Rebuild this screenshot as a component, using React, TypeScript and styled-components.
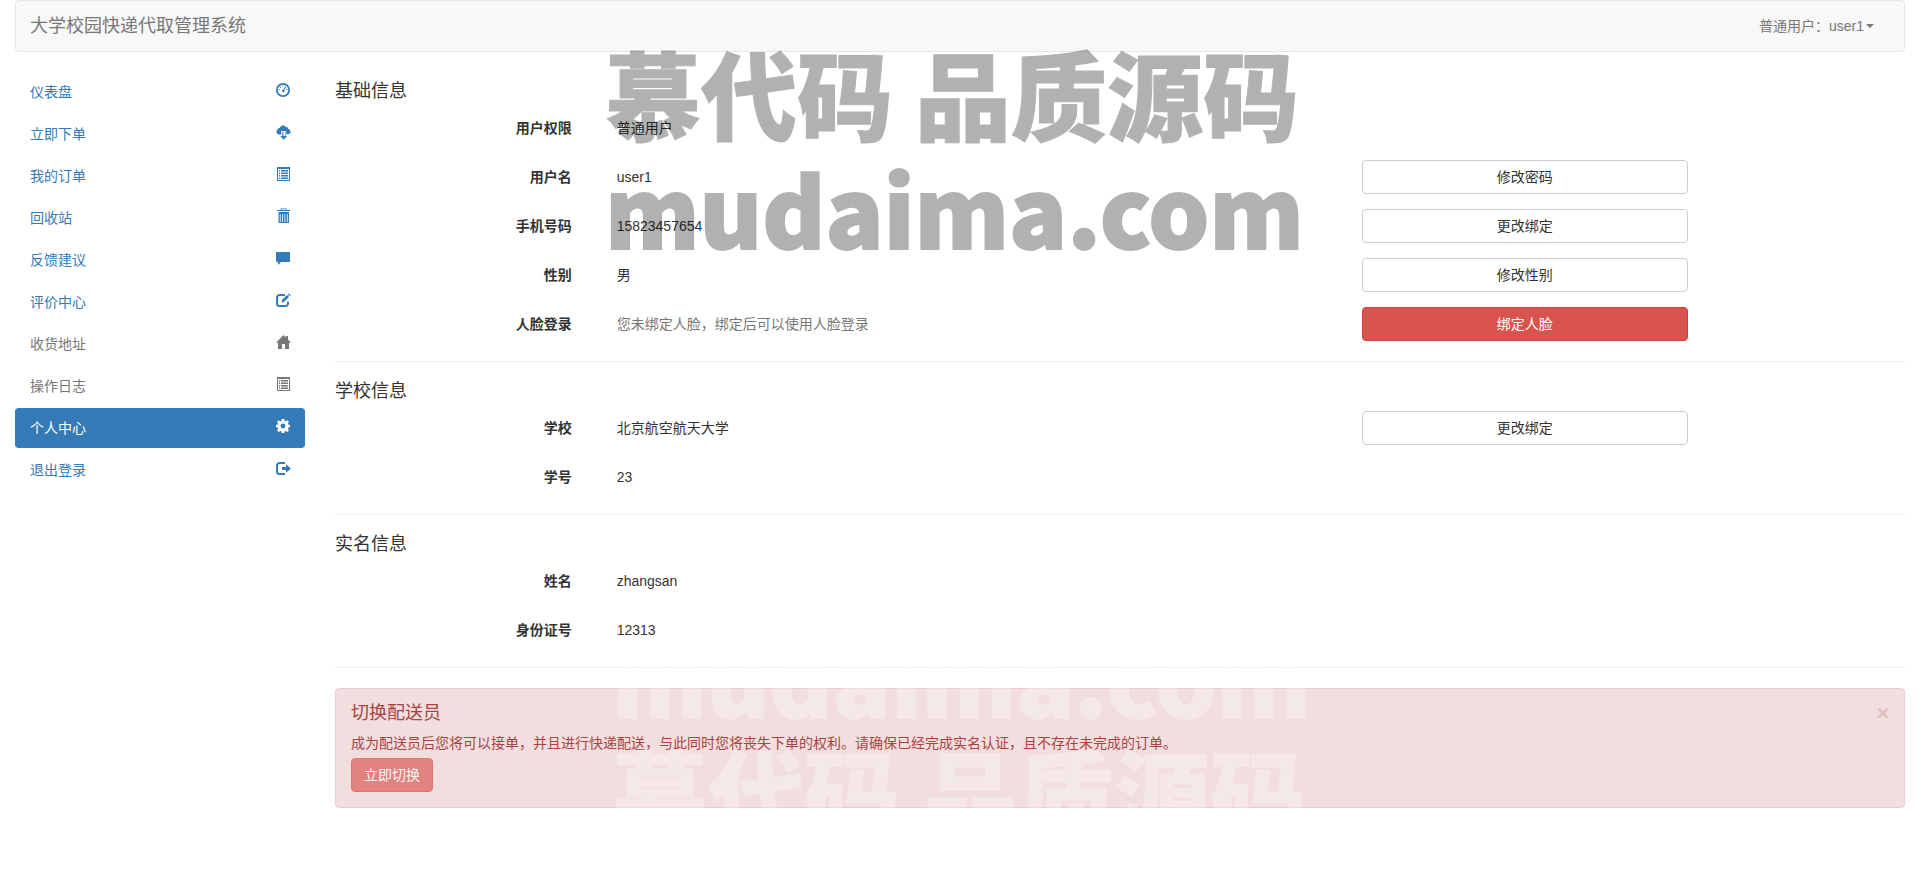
import React from "react";
import styled, { createGlobalStyle } from "styled-components";

const GlobalStyle = createGlobalStyle`
  *, *::before, *::after { box-sizing: border-box; }
  body {
    margin: 0;
    background: #fff;
    color: #333;
    font-family: "Liberation Sans", "Noto Sans CJK SC", sans-serif;
    font-size: 14px;
    line-height: 20px;
  }
  button { font: inherit; cursor: pointer; }
`;

const Page = styled.div`
  position: relative;
  padding: 0 15px;
`;

const Navbar = styled.header`
  display: flex;
  align-items: center;
  justify-content: space-between;
  min-height: 52px;
  margin-bottom: 20px;
  padding: 0 15px 0 14px;
  border: 1px solid #e7e7e7;
  border-radius: 4px;
  background: #f8f8f8;
`;

const Brand = styled.a`
  color: #777;
  font-size: 18px;
  text-decoration: none;
`;

const UserMenu = styled.button`
  display: flex;
  align-items: center;
  gap: 2px;
  padding: 15px;
  border: 0;
  background: transparent;
  color: #777;
`;

const Caret = styled.span`
  border-top: 4px solid #777;
  border-left: 4px solid transparent;
  border-right: 4px solid transparent;
`;

const Columns = styled.div`
  display: grid;
  grid-template-columns: 2fr 10fr;
  margin: 0 -15px;
`;

const Sidebar = styled.nav`
  padding: 0 15px;
`;

const NavList = styled.ul`
  display: flex;
  flex-direction: column;
  gap: 2px;
  margin: 0;
  padding: 0;
  list-style: none;
`;

type Tone = "link" | "muted" | "active";

const toneColor: Record<Tone, string> = { link: "#337ab7", muted: "#777", active: "#fff" };

const NavLink = styled.a<{ $tone: Tone }>`
  display: flex;
  justify-content: space-between;
  height: 40px;
  padding: 10px 14px 10px 15px;
  border-radius: 4px;
  background: ${(p) => (p.$tone === "active" ? "#337ab7" : "transparent")};
  color: ${(p) => toneColor[p.$tone]};
  text-decoration: none;
`;

const Main = styled.main`
  min-width: 0;
  padding: 0 15px;
`;

const Section = styled.section`
  padding-top: 10px;
  border-bottom: 1px solid #eee;
  padding-bottom: 20px;
  & + & { padding-top: 20px; }
`;

const Heading = styled.h4`
  margin: 0 0 10px;
  font-size: 18px;
  font-weight: 400;
  line-height: 19px;
`;

const Rows = styled.dl`
  display: flex;
  flex-direction: column;
  gap: 15px;
  margin: 0 -15px;
`;

const Row = styled.div`
  display: grid;
  grid-template-columns: 2fr 10fr;
  min-height: 34px;
`;

const Term = styled.dt`
  padding: 7px 15px;
  font-weight: 700;
  text-align: right;
`;

const Detail = styled.dd`
  display: grid;
  grid-template-columns: 7fr 3fr 2fr;
  margin: 0;
  padding: 0 15px;
`;

const Value = styled.span<{ $muted?: boolean }>`
  padding: 7px 15px;
  color: ${(p) => (p.$muted ? "#777" : "#333")};
`;

const Button = styled.button<{ $danger?: boolean }>`
  height: 34px;
  padding: 6px 12px;
  border: 1px solid ${(p) => (p.$danger ? "#d43f3a" : "#ccc")};
  border-radius: 4px;
  background: ${(p) => (p.$danger ? "#d9534f" : "#fff")};
  color: ${(p) => (p.$danger ? "#fff" : "#333")};
  &:disabled { opacity: 0.65; cursor: not-allowed; }
`;

const Alert = styled.section`
  display: flex;
  justify-content: space-between;
  align-items: flex-start;
  margin: 20px 0;
  padding: 15px;
  border: 1px solid #ebccd1;
  border-radius: 4px;
  background: #f2dede;
  color: #a94442;
`;

const AlertText = styled.p`
  margin: 0 0 5px;
`;

const Close = styled.button`
  padding: 0;
  border: 0;
  background: transparent;
  color: #a94442;
  font-size: 21px;
  font-weight: 700;
  line-height: 18px;
  opacity: 0.2;
`;

const Watermark = styled.div<{ $top: number; $shift: number; $light?: boolean }>`
  position: absolute;
  top: ${(p) => p.$top}px;
  left: calc(50% - ${(p) => p.$shift}px);
  color: ${(p) => (p.$light ? "#fff" : "#000")};
  opacity: 0.3;
  font-family: "Noto Sans CJK SC", sans-serif;
  font-size: 96px;
  font-weight: 900;
  line-height: ${(p) => (p.$light ? 114 : 116)}px;
  white-space: nowrap;
  pointer-events: none;
  user-select: none;
`;

const WatermarkTitle = styled.div`
  -webkit-text-stroke: 1px currentColor;
`;

const WatermarkSite = styled.div`
  -webkit-text-stroke: 2px currentColor;
`;

const Glyph = styled.svg`
  display: block;
  flex: none;
  width: 16px;
  height: 16px;
  fill: currentColor;
`;

const glyphs: Record<string, React.ReactNode> = {
  dashboard: (
    <>
      <circle cx="8" cy="8" r="6.100" fill="none" stroke="currentColor" strokeWidth="1.800" />
      <path d="M7.500 3.600h1v1h-1zM5 4.800h1v1H5zM3.900 7h1v1h-1zM11.200 7h1v1h-1zM10.300 4.300l.8.500-1.700 3.300a1.300 1.300 0 1 1-1-.5z" />
    </>
  ),
  cloud: (
    <path d="M4 10.600A3 3 0 0 1 2.600 5.200 3 3 0 0 1 4.800 3.700 3.300 3.300 0 0 1 10.800 3a2.200 2.200 0 0 1 2.500 2A2.700 2.700 0 0 1 13.500 10.300h-2.300V6.900H6.200v3.700zM7.200 8h1v3.800h1.800V8h.5v4H12.200L8.700 15.800 5.200 12h2z" />
  ),
  list: (
    <path fillRule="evenodd" d="M2 1h13v14H2zM3 3v11h11V3zM4 4h1v1.500H4zM6 4h7v1.500H6zM4 6.500h1V8H4zM6 6.500h7V8H6zM4 9h1v1.500H4zM6 9h7v1.500H6zM4 11.500h1V13H4zM6 11.500h7V13H6z" />
  ),
  trash: (
    <path fillRule="evenodd" d="M5.500 2V.5h6V2H15v1H2V2zM6.500 1.300V2h4v-.7zM3.500 4h10.500v11H3.500zM4.800 6v8h.8V6zM7 6v8h.8V6zM9.500 6v8h.8V6zM11.900 6v8h.8V6z" />
  ),
  comment: <path d="M2 2h12a1 1 0 0 1 1 1v8a1 1 0 0 1-1 1H6l-3 3v-3H2a1 1 0 0 1-1-1V3a1 1 0 0 1 1-1z" />,
  edit: (
    <>
      <path d="M10 3H4.500A2.500 2.500 0 0 0 2 5.500v6A2.500 2.500 0 0 0 4.500 14h6a2.500 2.500 0 0 0 2.500-2.500V9.500" fill="none" stroke="currentColor" strokeWidth="2" />
      <path d="M6.400 10.800l.8-3L12 3l2 2-4.800 4.800zM12.700 2.400l1-.8 2 1.700-1 1z" />
    </>
  ),
  home: <path d="M8.500 1l2.500 2.500V2h2v3.500L16 8.700h-2V15h-4V10H7v5H3V8.700H1z" />,
  cog: (
    <path fillRule="evenodd" d="M6.700 1h2.600l.4 2 .9.400 1.700-1.200 1.700 1.700-1.200 1.700.4 1 1.800.3v2.400l-1.800.4-.4 1 1.200 1.700-1.700 1.700-1.700-1.200-.9.400-.4 1.700H6.700l-.4-1.700-.9-.4-1.700 1.200L2 12.400l1.200-1.700-.4-1L1 9.300V6.900l1.800-.3.4-1L2 3.900l1.700-1.700 1.700 1.200.9-.4zM8 5.600a2.400 2.400 0 1 0 0 4.800 2.400 2.400 0 0 0 0-4.800z" />
  ),
  logout: (
    <>
      <path d="M10 3H4.500A2.500 2.500 0 0 0 2 5.500v6A2.500 2.500 0 0 0 4.500 14H10" fill="none" stroke="currentColor" strokeWidth="2" />
      <path d="M11 4.200l5 4.300-5 4.300v-2.800H7V7h4z" />
    </>
  ),
};

const menu: { label: string; icon: string; tone: Tone }[] = [
  { label: "仪表盘", icon: "dashboard", tone: "link" },
  { label: "立即下单", icon: "cloud", tone: "link" },
  { label: "我的订单", icon: "list", tone: "link" },
  { label: "回收站", icon: "trash", tone: "link" },
  { label: "反馈建议", icon: "comment", tone: "link" },
  { label: "评价中心", icon: "edit", tone: "link" },
  { label: "收货地址", icon: "home", tone: "muted" },
  { label: "操作日志", icon: "list", tone: "muted" },
  { label: "个人中心", icon: "cog", tone: "active" },
  { label: "退出登录", icon: "logout", tone: "link" },
];

interface Field {
  label: string;
  value: string;
  muted?: boolean;
  action?: string;
  danger?: boolean;
}

const sections: { title: string; fields: Field[] }[] = [
  {
    title: "基础信息",
    fields: [
      { label: "用户权限", value: "普通用户" },
      { label: "用户名", value: "user1", action: "修改密码" },
      { label: "手机号码", value: "15823457654", action: "更改绑定" },
      { label: "性别", value: "男", action: "修改性别" },
      { label: "人脸登录", value: "您未绑定人脸，绑定后可以使用人脸登录", muted: true, action: "绑定人脸", danger: true },
    ],
  },
  {
    title: "学校信息",
    fields: [
      { label: "学校", value: "北京航空航天大学", action: "更改绑定" },
      { label: "学号", value: "23" },
    ],
  },
  {
    title: "实名信息",
    fields: [
      { label: "姓名", value: "zhangsan" },
      { label: "身份证号", value: "12313" },
    ],
  },
];

export default function App() {
  return (
    <Page lang="zh-CN">
      <GlobalStyle />
      <Navbar>
        <Brand href="#">大学校园快递代取管理系统</Brand>
        <UserMenu type="button">
          普通用户：user1
          <Caret />
        </UserMenu>
      </Navbar>
      <Columns>
        <Sidebar>
          <NavList>
            {menu.map((item) => (
              <li key={item.label}>
                <NavLink href="#" $tone={item.tone}>
                  {item.label}
                  <Glyph viewBox="0 0 16 16" aria-hidden="true">{glyphs[item.icon]}</Glyph>
                </NavLink>
              </li>
            ))}
          </NavList>
        </Sidebar>
        <Main>
          {sections.map((section) => (
            <Section key={section.title}>
              <Heading>{section.title}</Heading>
              <Rows>
                {section.fields.map((field) => (
                  <Row key={field.label}>
                    <Term>{field.label}</Term>
                    <Detail>
                      <Value $muted={field.muted}>{field.value}</Value>
                      {field.action && (
                        <Button type="button" $danger={field.danger}>{field.action}</Button>
                      )}
                    </Detail>
                  </Row>
                ))}
              </Rows>
            </Section>
          ))}
          <Alert>
            <div>
              <Heading>切换配送员</Heading>
              <AlertText>
                成为配送员后您将可以接单，并且进行快递配送，与此同时您将丧失下单的权利。请确保已经完成实名认证，且不存在未完成的订单。
              </AlertText>
              <Button type="button" $danger disabled>立即切换</Button>
            </div>
            <Close type="button" aria-label="关闭">×</Close>
          </Alert>
        </Main>
      </Columns>
      <Watermark $top={34} $shift={355} aria-hidden="true">
        <WatermarkTitle>慕代码 品质源码</WatermarkTitle>
        <WatermarkSite>mudaima.com</WatermarkSite>
      </Watermark>
      <Watermark $top={620} $shift={348} $light aria-hidden="true">
        <WatermarkSite>mudaima.com</WatermarkSite>
        <WatermarkTitle>慕代码 品质源码</WatermarkTitle>
      </Watermark>
    </Page>
  );
}
